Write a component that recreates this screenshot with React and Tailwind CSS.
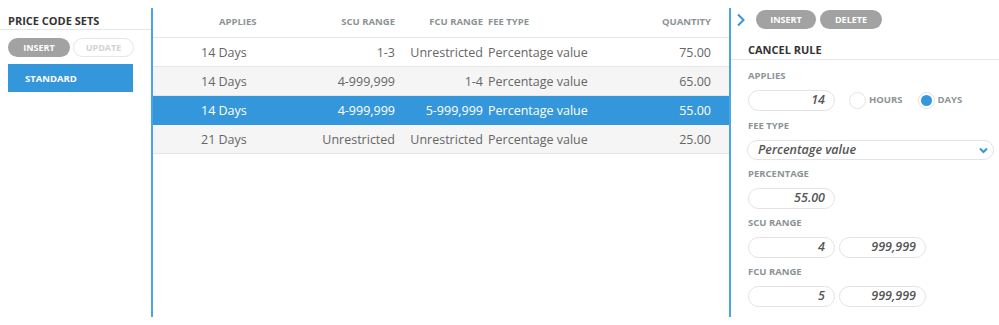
import React from "react";

const rows = [
  { a: "14 Days", s: "1-3", f: "Unrestricted", t: "Percentage value", q: "75.00", alt: false, sel: false },
  { a: "14 Days", s: "4-999,999", f: "1-4", t: "Percentage value", q: "65.00", alt: true, sel: false },
  { a: "14 Days", s: "4-999,999", f: "5-999,999", t: "Percentage value", q: "55.00", alt: false, sel: true },
  { a: "21 Days", s: "Unrestricted", f: "Unrestricted", t: "Percentage value", q: "25.00", alt: true, sel: false },
];

function Pill({ children, w = "w-[87px]" }) {
  return (
    <div className={`${w} h-[21px] rounded-full border border-[#e3e3e3] bg-white flex items-center justify-end pr-[9px] text-[12.5px] italic font-semibold text-[#555]`}>
      {children}
    </div>
  );
}

function Label({ children }) {
  return <div className="text-[9.5px] font-bold text-[#8b9396] leading-[12px]">{children}</div>;
}

export default function App() {
  return (
    <div className="w-[999px] h-[325px] bg-white flex pt-[8px] pb-[8px] text-[#666]" style={{ fontFamily: '"Open Sans", "Noto Sans", sans-serif' }}>
      {/* Left panel */}
      <div className="w-[151px] flex flex-col">
        <div className="h-[21px] pl-[8px] pt-[6px] text-[11px] font-bold text-[#333] leading-[14px]">PRICE CODE SETS</div>
        <div className="h-[1px] bg-[#e4e6ee]" />
        <div className="pl-[8px] pt-[8px] flex gap-[3px]">
          <div className="w-[62px] h-[19px] rounded-full bg-[#a2a2a2] text-white text-[9px] font-bold flex items-center justify-center">INSERT</div>
          <div className="w-[61px] h-[19px] rounded-full border border-[#e6e6e6] text-[#d2d2d2] text-[9px] font-bold flex items-center justify-center">UPDATE</div>
        </div>
        <div className="ml-[8px] mt-[7px] w-[125px] h-[28px] bg-[#3597db] text-white text-[9.5px] font-bold flex items-center pl-[17px] pt-[3px]">STANDARD</div>
      </div>

      {/* Divider */}
      <div className="w-[2px] bg-[#49a5e3]" />

      {/* Middle table */}
      <div className="w-[576px] flex flex-col">
        <div className="h-[30px] grid grid-cols-[147px_95px_88px_128px_100px] items-center text-[9.5px] font-bold text-[#8b9396] border-b border-[#e6e6e6]">
          <div className="pl-[66px]">APPLIES</div>
          <div className="text-right">SCU RANGE</div>
          <div className="text-right">FCU RANGE</div>
          <div className="pl-[5px]">FEE TYPE</div>
          <div className="text-right">QUANTITY</div>
        </div>
        {rows.map((r, i) => (
          <div
            key={i}
            className={`h-[29px] grid grid-cols-[147px_95px_88px_128px_100px] items-center text-[12.5px] pt-[2px] border-b ${
              r.sel ? "bg-[#3597db] text-white border-[#3597db]" : r.alt ? "bg-[#f5f5f5] border-[#e6e6e6]" : "bg-white border-[#e6e6e6]"
            }`}
          >
            <div className="pl-[48px]">{r.a}</div>
            <div className="text-right">{r.s}</div>
            <div className="text-right">{r.f}</div>
            <div className="pl-[5px]">{r.t}</div>
            <div className="text-right">{r.q}</div>
          </div>
        ))}
      </div>

      {/* Divider */}
      <div className="w-[2px] bg-[#49a5e3]" />

      {/* Right panel */}
      <div className="flex-1 flex flex-col">
        <div className="h-[21px] pt-[2px] flex items-center">
          <svg width="10" height="14" viewBox="0 0 10 14" className="ml-[5px] mr-[10px]">
            <path d="M2 1.5 L7.5 7 L2 12.5" fill="none" stroke="#3597db" strokeWidth="2" />
          </svg>
          <div className="w-[60px] h-[19px] rounded-full bg-[#a2a2a2] text-white text-[9px] font-bold flex items-center justify-center">INSERT</div>
          <div className="ml-[4px] w-[62px] h-[19px] rounded-full bg-[#a2a2a2] text-white text-[9px] font-bold flex items-center justify-center">DELETE</div>
        </div>
        <div className="h-[30px] pl-[17px] pt-[14px] text-[11px] font-bold text-[#333] leading-[14px]">CANCEL RULE</div>
        <div className="h-[1px] bg-[#e4e6ee]" />
        <div className="pl-[17px] flex flex-col">
          <div className="pt-[10px]"><Label>APPLIES</Label></div>
          <div className="mt-[8px] flex items-center">
            <Pill>14</Pill>
            <div className="ml-[14px] w-[17px] h-[17px] rounded-full border border-[#e3e3e3]" />
            <span className="ml-[3px] text-[9.5px] font-bold text-[#8b9396]">HOURS</span>
            <div className="ml-[15px] w-[17px] h-[17px] rounded-full border border-[#e3e3e3] flex items-center justify-center">
              <div className="w-[11px] h-[11px] rounded-full bg-[#3597db]" />
            </div>
            <span className="ml-[3px] text-[9.5px] font-bold text-[#8b9396]">DAYS</span>
          </div>
          <div className="mt-[9px]"><Label>FEE TYPE</Label></div>
          <div className="mt-[8px] -ml-[1px] w-[247px] h-[20px] rounded-full border border-[#e3e3e3] flex items-center pl-[10px] pr-[5px] text-[12.5px] italic font-semibold text-[#555]">
            <span className="flex-1">Percentage value</span>
            <svg width="9" height="7" viewBox="0 0 9 7">
              <path d="M1 1.5 L4.5 5 L8 1.5" fill="none" stroke="#3597db" strokeWidth="2" />
            </svg>
          </div>
          <div className="mt-[8px]"><Label>PERCENTAGE</Label></div>
          <div className="mt-[8px]"><Pill>55.00</Pill></div>
          <div className="mt-[8px]"><Label>SCU RANGE</Label></div>
          <div className="mt-[8px] flex gap-[4px]"><Pill>4</Pill><Pill>999,999</Pill></div>
          <div className="mt-[8px]"><Label>FCU RANGE</Label></div>
          <div className="mt-[8px] flex gap-[4px]"><Pill>5</Pill><Pill>999,999</Pill></div>
        </div>
      </div>
    </div>
  );
}
